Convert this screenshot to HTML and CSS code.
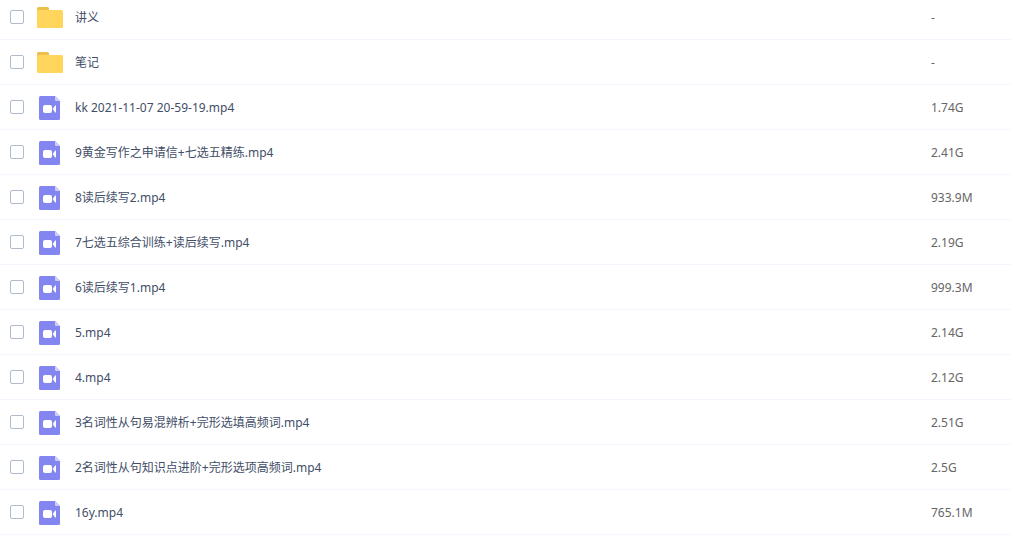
FILE: index.html
```
<!DOCTYPE html>
<html lang="zh-CN">
<head>
  <meta charset="UTF-8" />
  <title>文件列表</title>
  <link rel="stylesheet" href="styles.css">
</head>
<body>
  <svg class="sprite" aria-hidden="true">
    <symbol id="icon-folder" viewBox="0 0 26 21">
      <path d="M0 6V1.500Q0 0 1.500 0H10.500Q12 0 12 1.500V6z" fill="#ecbf4a"/>
      <rect y="3" width="26" height="18" rx="1.500" fill="#ffd55b"/>
    </symbol>
    <symbol id="icon-video" viewBox="0 0 21 24">
      <path d="M1.500 0H16l5 5v17.500q0 1.500-1.500 1.500h-18Q0 24 0 22.500v-21Q0 0 1.500 0z" fill="#8386f0"/>
      <path d="M16 0l5 5h-4q-1 0-1-1z" fill="#cdcefa"/>
      <rect x="4" y="9" width="9" height="8" rx="2" fill="#fff"/>
      <path d="M13.700 13L16 9.700q1-.9 1 .2v6.200q0 1.100-1 .2z" fill="#fff"/>
    </symbol>
  </svg>

  <table class="file-list">
    <tbody>
      <tr>
        <td class="check"><input type="checkbox" id="f1"></td>
        <td class="icon"><svg class="folder"><use href="#icon-folder"/></svg></td>
        <td class="name"><label for="f1">讲义</label></td>
        <td class="size">-</td>
      </tr>
      <tr>
        <td class="check"><input type="checkbox" id="f2"></td>
        <td class="icon"><svg class="folder"><use href="#icon-folder"/></svg></td>
        <td class="name"><label for="f2">笔记</label></td>
        <td class="size">-</td>
      </tr>
      <tr>
        <td class="check"><input type="checkbox" id="f3"></td>
        <td class="icon"><svg class="video"><use href="#icon-video"/></svg></td>
        <td class="name"><label for="f3">kk 2021-11-07 20-59-19.mp4</label></td>
        <td class="size">1.74G</td>
      </tr>
      <tr>
        <td class="check"><input type="checkbox" id="f4"></td>
        <td class="icon"><svg class="video"><use href="#icon-video"/></svg></td>
        <td class="name"><label for="f4">9黄金写作之申请信+七选五精练.mp4</label></td>
        <td class="size">2.41G</td>
      </tr>
      <tr>
        <td class="check"><input type="checkbox" id="f5"></td>
        <td class="icon"><svg class="video"><use href="#icon-video"/></svg></td>
        <td class="name"><label for="f5">8读后续写2.mp4</label></td>
        <td class="size">933.9M</td>
      </tr>
      <tr>
        <td class="check"><input type="checkbox" id="f6"></td>
        <td class="icon"><svg class="video"><use href="#icon-video"/></svg></td>
        <td class="name"><label for="f6">7七选五综合训练+读后续写.mp4</label></td>
        <td class="size">2.19G</td>
      </tr>
      <tr>
        <td class="check"><input type="checkbox" id="f7"></td>
        <td class="icon"><svg class="video"><use href="#icon-video"/></svg></td>
        <td class="name"><label for="f7">6读后续写1.mp4</label></td>
        <td class="size">999.3M</td>
      </tr>
      <tr>
        <td class="check"><input type="checkbox" id="f8"></td>
        <td class="icon"><svg class="video"><use href="#icon-video"/></svg></td>
        <td class="name"><label for="f8">5.mp4</label></td>
        <td class="size">2.14G</td>
      </tr>
      <tr>
        <td class="check"><input type="checkbox" id="f9"></td>
        <td class="icon"><svg class="video"><use href="#icon-video"/></svg></td>
        <td class="name"><label for="f9">4.mp4</label></td>
        <td class="size">2.12G</td>
      </tr>
      <tr>
        <td class="check"><input type="checkbox" id="f10"></td>
        <td class="icon"><svg class="video"><use href="#icon-video"/></svg></td>
        <td class="name"><label for="f10">3名词性从句易混辨析+完形选填高频词.mp4</label></td>
        <td class="size">2.51G</td>
      </tr>
      <tr>
        <td class="check"><input type="checkbox" id="f11"></td>
        <td class="icon"><svg class="video"><use href="#icon-video"/></svg></td>
        <td class="name"><label for="f11">2名词性从句知识点进阶+完形选项高频词.mp4</label></td>
        <td class="size">2.5G</td>
      </tr>
      <tr>
        <td class="check"><input type="checkbox" id="f12"></td>
        <td class="icon"><svg class="video"><use href="#icon-video"/></svg></td>
        <td class="name"><label for="f12">16y.mp4</label></td>
        <td class="size">765.1M</td>
      </tr>
    </tbody>
  </table>
</body>
</html>
```
FILE: styles.css
```
body {
  margin: 0;
  background: #fff;
  font-family: Tahoma, "Noto Sans", "Noto Sans CJK SC", sans-serif;
  font-size: 12px;
  line-height: 20px;
  color: #424e67;
}
.sprite {
  display: none;
}
/* the list is scrolled a little, so the first row is cut at the top */
.file-list {
  width: 100%;
  margin-top: -5px;
  table-layout: fixed;
  border-collapse: separate;
  border-spacing: 0;
}
td {
  box-sizing: border-box;
  height: 45px;
  padding: 0;
  border-bottom: 1px solid #f2f6fd;
  vertical-align: middle;
}
.check {
  width: 37px;
  padding-left: 10px;
}
.check input {
  display: block;
  appearance: none;
  box-sizing: border-box;
  width: 14px;
  height: 14px;
  margin: 0;
  border: 1px solid #afbccb;
  border-radius: 2px;
  background: #fff;
  cursor: pointer;
}
.check input:checked {
  background: #06a7ff;
  border-color: #06a7ff;
}
.icon {
  width: 38px;
}
.icon svg {
  display: block;
}
.folder {
  width: 26px;
  height: 21px;
}
.video {
  width: 21px;
  height: 24px;
  margin-top: 2px;
  margin-left: 2px;
}
.name,
.size {
  padding-top: 2px;
}
.name {
  overflow: hidden;
  white-space: nowrap;
  text-overflow: ellipsis;
}
.size {
  width: 80px;
  color: #666;
}
```
